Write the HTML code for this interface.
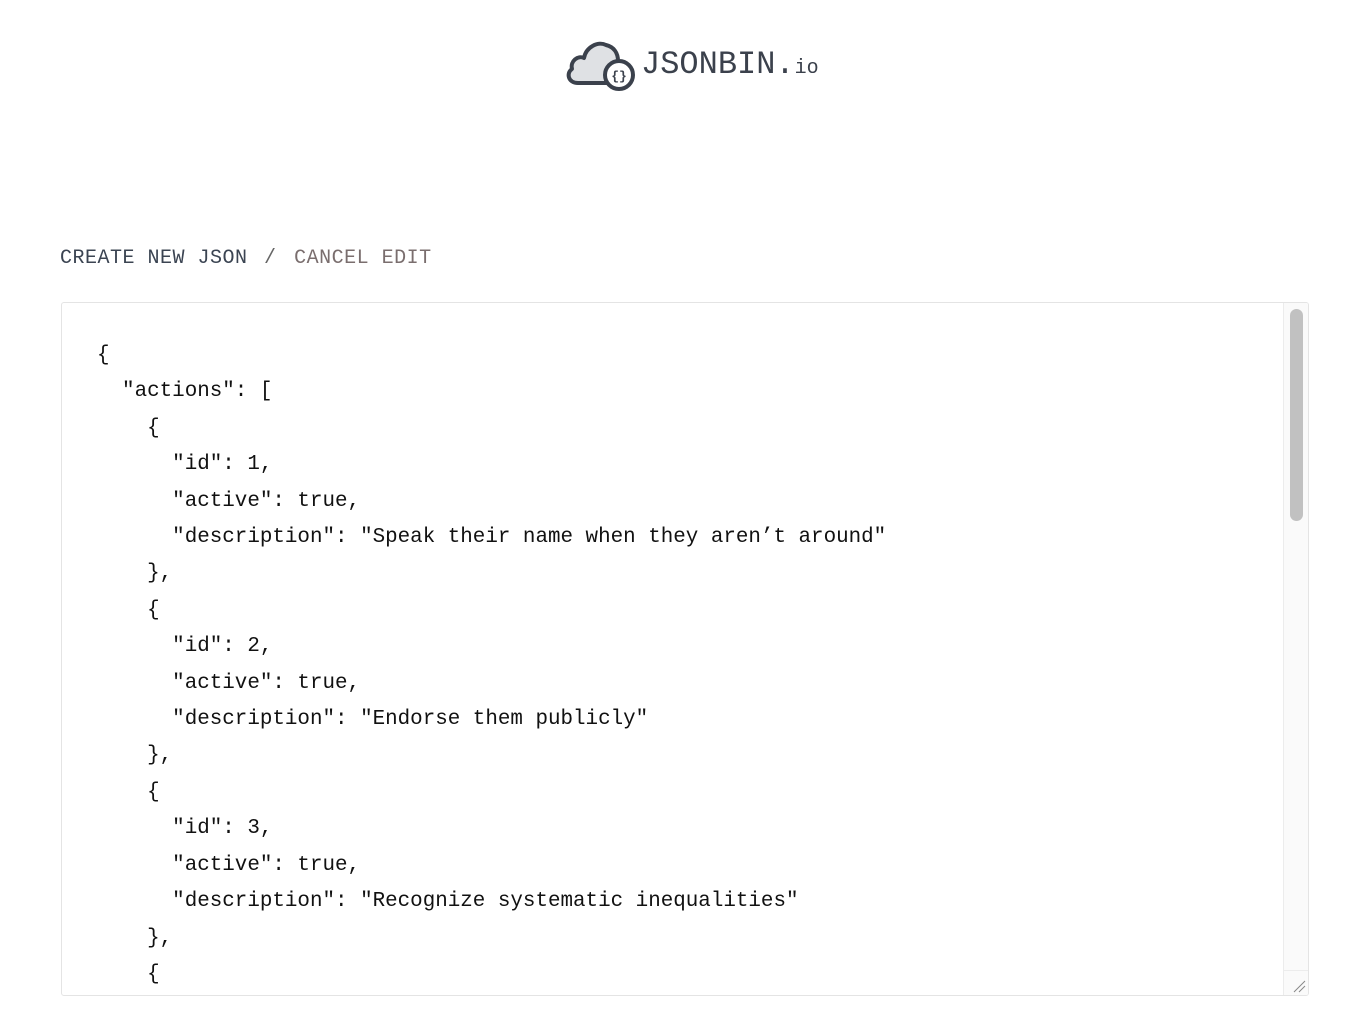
<!DOCTYPE html>
<html><head><meta charset="utf-8"><style>
html,body{margin:0;padding:0;background:#fff;width:1364px;height:1027px;overflow:hidden;}
body{font-family:"Liberation Mono",monospace;position:relative;}
.logo{position:absolute;left:564px;top:37px;width:260px;height:60px;}
.logo .t{position:absolute;left:77px;top:9px;font-size:32px;color:#3b414c;letter-spacing:0px;}
.logo .io{font-size:20px;letter-spacing:0;}
.nav{position:absolute;left:60px;top:247px;font-size:20px;letter-spacing:0.5px;color:#3b4452;white-space:pre;}
.nav .s{margin-left:4px;color:#666;}
.nav .c{color:#7a6e6e;margin-left:5px;}
.box{position:absolute;left:61px;top:302px;width:1246px;height:692px;border:1px solid #e4e4e4;border-radius:3px;overflow:hidden;}
.code{position:absolute;left:35px;top:35px;font-size:20.88px;line-height:36.4px;color:#111;white-space:pre;margin:0;font-family:"Liberation Mono",monospace;}
.track{position:absolute;right:0;top:0;width:24px;height:100%;border-left:1px solid #ececec;background:#fafafa;}
.thumb{position:absolute;left:6px;top:6px;width:13px;height:212px;border-radius:7px;background:#c1c1c1;}
.grip{position:absolute;right:0;bottom:0;width:24px;height:24px;border-top:1px solid #ececec;background:#fafafa;}
</style></head><body>
<div class="logo">
<svg width="72" height="58" viewBox="0 0 72 58" style="position:absolute;left:0;top:0">
<path d="M14 46 C4 46 2 36 8 32 C6 24 14 18 20 21 C22 10 34 4 42 8 C50 10 54 16 54 24 C60 26 62 32 60 36 L52 46 Z" fill="#dfe1e4" stroke="#3b414c" stroke-width="4" stroke-linejoin="round"/>
<circle cx="55" cy="38" r="14" fill="#fff" stroke="#3b414c" stroke-width="4"/>
<text x="55" y="43" font-family="Liberation Mono,monospace" font-size="13" font-weight="bold" fill="#3b414c" text-anchor="middle">{}</text>
</svg>
<div class="t">JSONBIN.<span class="io">io</span></div>
</div>
<div class="nav">CREATE NEW JSON <span class="s">/</span> <span class="c">CANCEL EDIT</span></div>
<div class="box">
<pre class="code">{
  "actions": [
    {
      "id": 1,
      "active": true,
      "description": "Speak their name when they aren’t around"
    },
    {
      "id": 2,
      "active": true,
      "description": "Endorse them publicly"
    },
    {
      "id": 3,
      "active": true,
      "description": "Recognize systematic inequalities"
    },
    {</pre>
<div class="track"><div class="thumb"></div><div class="grip"><svg width="24" height="24"><path d="M10 21 L21 10 M15 21 L21 15" stroke="#888" stroke-width="1"/></svg></div></div>
</div>
</body></html>
